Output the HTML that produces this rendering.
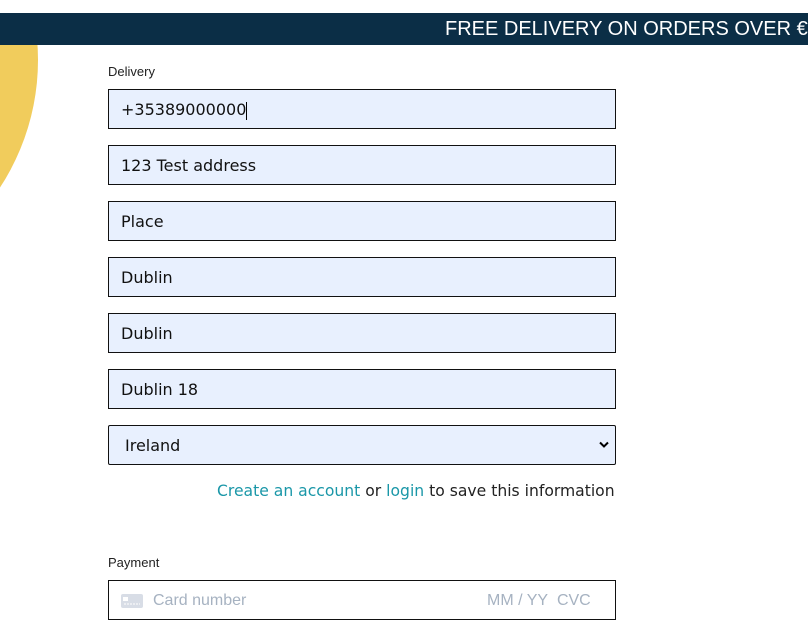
<!DOCTYPE html>
<html><head><style>
body{margin:0;width:808px;height:635px;overflow:hidden;background:#fff;font-family:"DejaVu Sans","Liberation Sans",sans-serif;position:relative}
.top{position:absolute;left:0;top:0;width:808px;height:13px;background:#fff}
.ban{position:absolute;left:0;top:13px;width:808px;height:32px;background:#0b2e46;color:#fff;font-size:20px;line-height:32px;white-space:nowrap;font-family:"Liberation Sans",sans-serif}
.ban span{position:absolute;left:445px}
.sun{position:absolute;left:-428px;top:-173px;width:466px;height:466px;border-radius:50%;background:#f1cc5c}
.lbl{position:absolute;left:108px;font-size:13px;color:#222;font-family:"Liberation Sans",sans-serif}
.in{position:absolute;left:108px;width:506px;height:38px;border:1px solid #111;background:#e8f0fe;font-size:16px;line-height:40px;box-sizing:content-box;color:#111}
.in span{position:absolute;left:12px}
.cur{display:inline-block;width:1px;height:18px;background:#000;vertical-align:middle}
.note{position:absolute;left:217px;top:482px;font-size:15.6px;color:#222;white-space:nowrap}
.note a{color:#1a97a8;text-decoration:none}
</style></head><body>
<div class="sun"></div>
<div class="top"></div>
<div class="ban"><span>FREE DELIVERY ON ORDERS OVER €</span></div>
<div class="lbl" style="top:64px">Delivery</div>
<div class="in" style="top:89px"><span>+35389000000<i class="cur"></i></span></div>
<div class="in" style="top:145px"><span>123 Test address</span></div>
<div class="in" style="top:201px"><span>Place</span></div>
<div class="in" style="top:257px"><span>Dublin</span></div>
<div class="in" style="top:313px"><span>Dublin</span></div>
<div class="in" style="top:369px"><span>Dublin 18</span></div>
<div class="in" style="top:425px;border-radius:2px"><span style="left:16px">Ireland</span>
<svg style="position:absolute;right:6px;top:15px" width="10" height="8" viewBox="0 0 10 8"><path d="M1 1.5 L5 5.5 L9 1.5" stroke="#000" stroke-width="2" fill="none"/></svg></div>
<div class="note"><a>Create an account</a> or <a>login</a> to save this information</div>
<div class="lbl" style="top:555px">Payment</div>
<div class="in" style="top:580px;background:#fff;color:#a6b2c1;font-family:'Liberation Sans',sans-serif">
<svg style="position:absolute;left:12px;top:13px" width="22" height="14"><rect width="22" height="14" rx="2" fill="#d8dde6"/><rect x="2" y="3" width="5" height="4" fill="#fff"/><path d="M3 10h16" stroke="#fff" stroke-dasharray="2 1"/></svg>
<span style="left:44px">Card number</span><span style="left:378px">MM / YY&nbsp; CVC</span></div>
</body></html>
